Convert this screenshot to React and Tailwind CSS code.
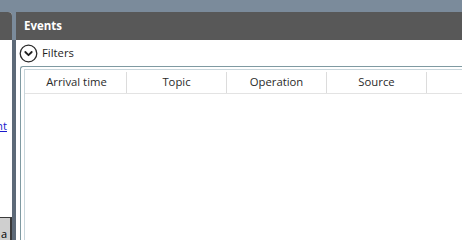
import React from 'react';

// Panneau "Events" avec filtres repliés et table vide
const colonnes = ['Arrival time', 'Topic', 'Operation', 'Source', ''];

const App = () => {
  return (
    <div
      className="w-[462px] h-[240px] overflow-hidden bg-[#7b8b9b] flex pt-[12px]"
      style={{ fontFamily: '"Open Sans", "Noto Sans", sans-serif' }}
    >
      {/* Panneau gauche (tronqué) */}
      <div className="w-[12px] shrink-0 flex flex-col bg-white rounded-tr-[4px] overflow-hidden">
        <div className="h-[28px] bg-[#585858] shrink-0" />
        <div className="flex-1 flex flex-col">
          <div className="mt-[79px] flex justify-end pr-[5px] overflow-hidden whitespace-nowrap">
            <span className="text-[11.3px] leading-[14px] text-[#1a1acc] underline">Event</span>
          </div>
          <div className="mt-auto h-[23px] bg-[#cfcfcf] border-t border-r-2 border-[#3a3a3a] flex items-end overflow-hidden">
            <span className="text-[11px] leading-[12px] text-black pl-[1px]">a</span>
          </div>
        </div>
      </div>

      {/* Séparateur */}
      <div className="w-[4px] shrink-0 flex flex-col">
        <div className="h-[28px]" />
        <div className="flex-1 bg-[#5d6a78]" />
      </div>

      {/* Panneau Events */}
      <div className="flex-1 flex flex-col bg-white min-w-0">
        <div className="h-[28px] bg-[#585858] flex items-center pl-[8px] shrink-0">
          <span className="text-white text-[11.5px] font-bold">Events</span>
        </div>

        {/* Ligne des filtres */}
        <div className="h-[26px] flex items-center pl-[3px] shrink-0">
          <svg width="19" height="19" viewBox="0 0 19 19" fill="none">
            <circle cx="9.5" cy="9.5" r="8.3" stroke="#2b2b2b" strokeWidth="1.3" />
            <path d="M6.3 8 L9.5 11.2 L12.7 8" stroke="#1f1f1f" strokeWidth="1.8" strokeLinecap="round" strokeLinejoin="round" />
          </svg>
          <span className="ml-[4px] text-[11.3px] text-[#1e1e1e]">Filters</span>
        </div>

        {/* Table */}
        <div className="flex-1 ml-[4px] border-l border-t border-[#7f9aa2] rounded-tl-[3px] pt-[2px] pl-[3px]">
          <div className="h-full border-l border-t border-[#c9d6dc]">
            <div className="h-[24px] flex pl-[2px] pt-[2px] border-b border-[#e3e3e3]">
              {colonnes.map((col, i) => (
                <div
                  key={i}
                  className="w-[100px] shrink-0 flex items-center justify-center border-r border-[#dcdcdc] text-[11.3px] text-[#2a2a2a] whitespace-nowrap"
                >
                  {col}
                </div>
              ))}
            </div>
          </div>
        </div>
      </div>
    </div>
  );
};

export default App;
